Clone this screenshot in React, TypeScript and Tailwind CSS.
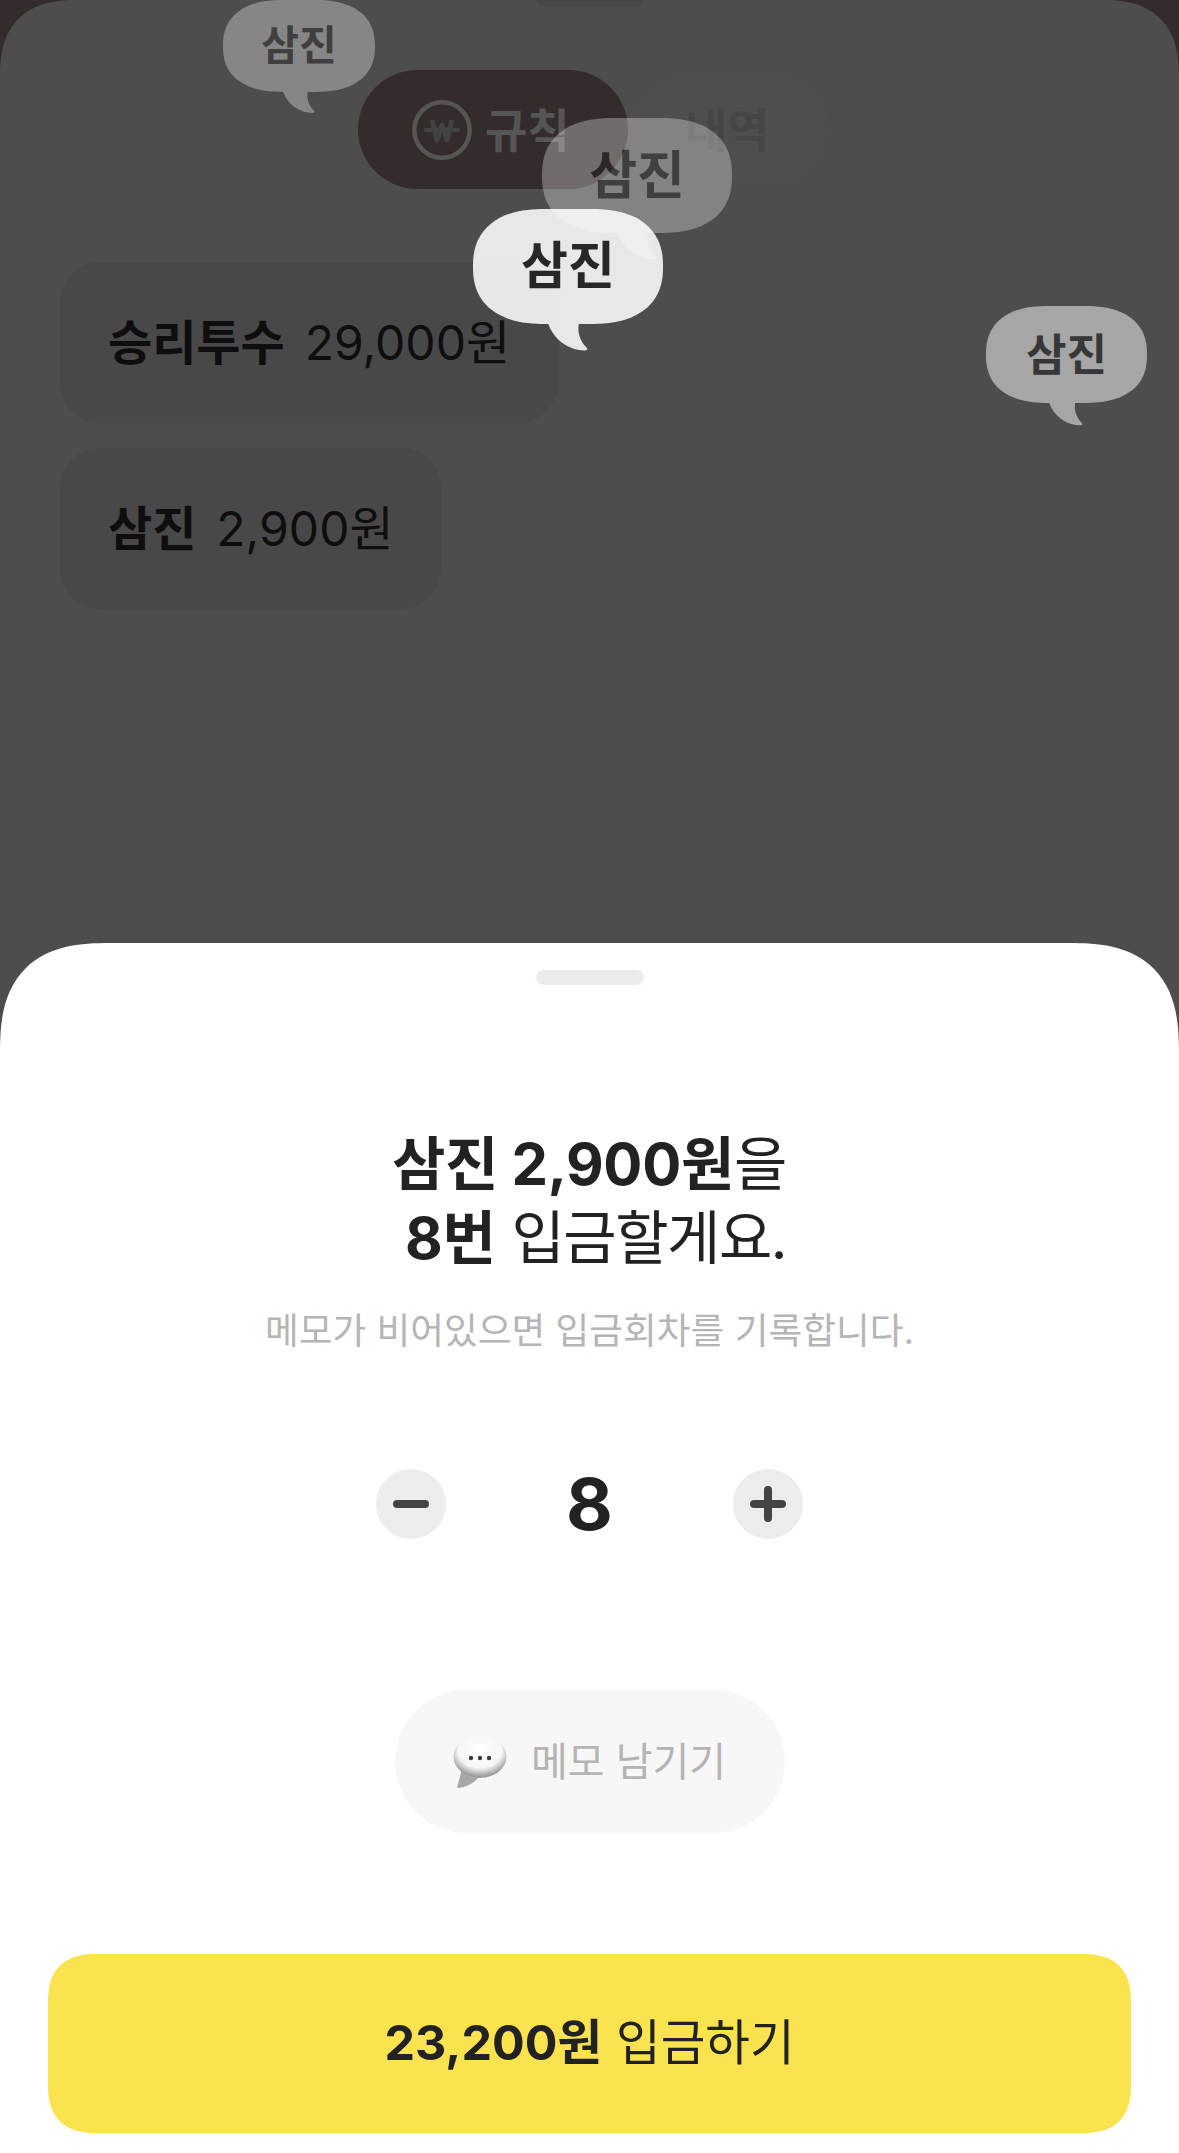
import { Minus, Plus } from "lucide-react"

const fontStack = "font-['Inter','Noto_Sans_CJK_KR',sans-serif]"

type BubbleProps = {
  className: string
  bodyClass: string
  textClass: string
  tailClass: string
}

// 말풍선: 몸통 + 꼬리, 투명도는 그룹 전체에 적용
function Bubble({ className, bodyClass, textClass, tailClass }: BubbleProps) {
  return (
    <div className={`absolute ${className}`}>
      <div className={`flex items-center justify-center bg-white w-full [corner-shape:superellipse(1.25)] ${bodyClass}`}>
        <span className={`font-bold text-[#222222] ${textClass}`}>삼진</span>
      </div>
      <svg viewBox="0 0 40 28" className={`absolute ${tailClass}`}>
        <path d="M0 0C4 13 17 27 37 27.5C39.5 27.5 40 26 38.500 24.500C32 18 29 9 31 0Z" fill="#ffffff" />
      </svg>
    </div>
  )
}

function WonIcon() {
  return (
    <svg viewBox="0 0 60 60" className="w-[60px] h-[60px]" fill="none">
      <circle cx="30" cy="30" r="27.700" stroke="#555555" strokeWidth="4.500" />
      <path d="M20 20L25 40L30 25L35 40L40 20" stroke="#404243" strokeWidth="5" strokeLinejoin="round" />
      <path d="M14 30H46" stroke="#404243" strokeWidth="4.500" strokeLinecap="round" />
    </svg>
  )
}

function SpeechEmoji() {
  return (
    <svg viewBox="0 0 54 54" className="w-[54px] h-[54px]">
      <defs>
        <radialGradient id="emojiBody" cx="50%" cy="36%" r="60%">
          <stop offset="0%" stopColor="#ffffff" />
          <stop offset="68%" stopColor="#f6f6f6" />
          <stop offset="100%" stopColor="#9c9c9c" />
        </radialGradient>
      </defs>
      <path d="M9 34L4 53C13 53 21 48 26 42Z" fill="#a8a8a8" />
      <ellipse cx="27" cy="21.500" rx="26.500" ry="21.500" fill="url(#emojiBody)" />
      <circle cx="18" cy="23" r="2.200" fill="#3c3c3c" />
      <circle cx="27" cy="23" r="2.200" fill="#3c3c3c" />
      <circle cx="36" cy="23" r="2.200" fill="#3c3c3c" />
    </svg>
  )
}

export default function App() {
  return (
    <div className={`relative w-full h-[2153px] overflow-hidden flex flex-col bg-[#332b2c] ${fontStack}`}>
      {/* 뒤 화면 (딤 처리) */}
      <div className="relative flex-1 bg-[#4d4d4d] rounded-t-[76px] [corner-shape:superellipse(1.3)]">
        <div className="mx-auto w-[108px] h-[6px] bg-[#464646] rounded-b-md" />

        <div className="flex mt-[64px] ml-[358px] h-[119px]">
          <div className="w-[270px] rounded-[60px] bg-[#332b2c] flex items-center pl-[54px] gap-[13px]">
            <WonIcon />
            <span className="text-[46px] font-bold text-[#555555] leading-none">규칙</span>
          </div>
          <div className="w-[203px] rounded-[60px] bg-[#4e4e4e] flex items-center pl-[57px]">
            <span className="text-[46px] font-bold text-[#454545] leading-none">내역</span>
          </div>
        </div>

        <div className="flex flex-col items-start gap-[25px] mt-[73px] ml-[60px]">
          <div className="h-[161px] w-[498px] rounded-[40px] bg-[#484848] flex items-center pl-[48px] gap-[20px] text-[#0e0e0e] text-[48px]">
            <span className="font-bold">승리투수</span>
            <span>29,000원</span>
          </div>
          <div className="h-[161px] w-[381px] rounded-[40px] bg-[#484848] flex items-center pl-[48px] gap-[20px] text-[#0e0e0e] text-[48px]">
            <span className="font-bold">삼진</span>
            <span>2,900원</span>
          </div>
        </div>

        <Bubble
          className="left-[223px] top-0 w-[152px] opacity-[.32]"
          bodyClass="h-[92px] rounded-[60px/46px]"
          textClass="text-[41px]"
          tailClass="left-[60px] top-[91px] w-[32px]"
        />
        <Bubble
          className="left-[542px] top-[118px] w-[190px] opacity-30"
          bodyClass="h-[115px] rounded-[72px/57px]"
          textClass="text-[52px]"
          tailClass="left-[75px] top-[114px] w-[40px]"
        />
        <Bubble
          className="left-[473px] top-[209px] w-[190px] opacity-[.87]"
          bodyClass="h-[115px] rounded-[72px/57px]"
          textClass="text-[51px]"
          tailClass="left-[75px] top-[114px] w-[40px]"
        />
        <Bubble
          className="left-[986px] top-[306px] w-[161px] opacity-50"
          bodyClass="h-[97px] rounded-[62px/48px]"
          textClass="text-[44px]"
          tailClass="left-[63px] top-[96px] w-[34px]"
        />
      </div>

      {/* 바텀시트 */}
      <div className="bg-[#4d4d4d]">
        <div className="h-[1210px] bg-white rounded-t-[110px] [corner-shape:superellipse(1.4)] flex flex-col items-center">
          <div className="mt-[27px] w-[108px] h-[15px] rounded-full bg-[#eaebef]" />

          <h1 className="mt-[142px] text-center text-[58px] leading-[74px] font-normal text-[#222222] tracking-[-0.3px]">
            <span className="font-bold">삼진 2,900원</span>을
            <br />
            <span className="inline-block pl-[12px]">
              <span className="font-bold">8번</span> <span className="tracking-[-1.5px]">입금할게요.</span>
            </span>
          </h1>
          <p className="mt-[31px] text-[36.7px] leading-[50px] text-[#b5b5b5]">메모가 비어있으면 입금회차를 기록합니다.</p>

          <div className="mt-[113px] flex items-center h-[70px]">
            <button className="w-[70px] h-[70px] rounded-full bg-[#ededed] flex items-center justify-center">
              <Minus className="w-[48px] h-[48px] text-[#444444]" strokeWidth={4} />
            </button>
            <span className="w-[287px] text-center text-[72px] font-bold text-[#222222] leading-none">8</span>
            <button className="w-[70px] h-[70px] rounded-full bg-[#ededed] flex items-center justify-center">
              <Plus className="w-[48px] h-[48px] text-[#444444]" strokeWidth={4} />
            </button>
          </div>

          <div className="mt-[151px] w-[390px] h-[143px] rounded-[72px] bg-[#f7f7f7] flex items-center justify-center gap-[24px]">
            <SpeechEmoji />
            <span className="text-[40px] text-[#b4b4b4] leading-none">메모 남기기</span>
          </div>

          <button className="mt-[121px] w-[1083px] h-[179px] rounded-[48px] [corner-shape:superellipse(1.3)] bg-[#fae34f] flex items-center justify-center text-[48.500px] text-[#222222]">
            <span className="font-bold">23,200원</span>
            <span className="ml-[14px]">입금하기</span>
          </button>
        </div>
      </div>
    </div>
  )
}
